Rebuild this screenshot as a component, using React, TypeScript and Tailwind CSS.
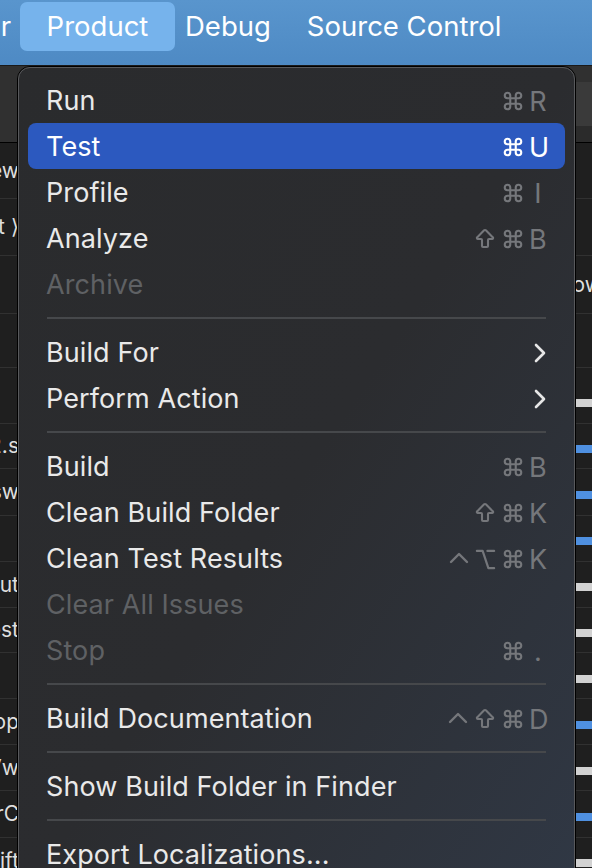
import React from 'react';
import { Command, Option, ArrowBigUp } from 'lucide-react';

type Item =
  | { kind: 'sep' }
  | {
      kind: 'item';
      label: string;
      keys?: string[];
      disabled?: boolean;
      active?: boolean;
      submenu?: boolean;
    };

const items: Item[] = [
  { kind: 'item', label: 'Run', keys: ['cmd', 'R'] },
  { kind: 'item', label: 'Test', keys: ['cmd', 'U'], active: true },
  { kind: 'item', label: 'Profile', keys: ['cmd', 'I'] },
  { kind: 'item', label: 'Analyze', keys: ['shift', 'cmd', 'B'] },
  { kind: 'item', label: 'Archive', disabled: true },
  { kind: 'sep' },
  { kind: 'item', label: 'Build For', submenu: true },
  { kind: 'item', label: 'Perform Action', submenu: true },
  { kind: 'sep' },
  { kind: 'item', label: 'Build', keys: ['cmd', 'B'] },
  { kind: 'item', label: 'Clean Build Folder', keys: ['shift', 'cmd', 'K'] },
  { kind: 'item', label: 'Clean Test Results', keys: ['ctrl', 'opt', 'cmd', 'K'] },
  { kind: 'item', label: 'Clear All Issues', disabled: true },
  { kind: 'item', label: 'Stop', keys: ['cmd', '.'], disabled: true },
  { kind: 'sep' },
  { kind: 'item', label: 'Build Documentation', keys: ['ctrl', 'shift', 'cmd', 'D'] },
  { kind: 'sep' },
  { kind: 'item', label: 'Show Build Folder in Finder' },
  { kind: 'sep' },
  { kind: 'item', label: 'Export Localizations...' },
];

// rows of the window that sits behind the menu
const rows: { h: number; left?: string; right?: string; bar?: 'white' | 'blue'; barTop?: number }[] = [
  { h: 56, left: 'New' },
  { h: 57, left: 'Set ⟩' },
  { h: 58, right: 'ow' },
  { h: 54 },
  { h: 56, bar: 'white', barTop: 31 },
  { h: 45, left: 'Sub2.s', bar: 'blue', barTop: 21 },
  { h: 47, left: 'File.sw', bar: 'blue', barTop: 22 },
  { h: 46, bar: 'blue', barTop: 21 },
  { h: 46, left: 'Out', bar: 'white', barTop: 21 },
  { h: 45, left: 'Test', bar: 'white', barTop: 21 },
  { h: 46, bar: 'white', barTop: 22 },
  { h: 46, left: 'Stop', bar: 'blue', barTop: 22 },
  { h: 46, left: 'Vw', bar: 'white', barTop: 22 },
  { h: 47, left: 'SrC', bar: 'blue', barTop: 22 },
  { h: 46, left: 'Swift', bar: 'white', barTop: 21 },
];

const Chevron = () => (
  <svg width="14" height="22" viewBox="0 0 14 22" fill="none">
    <polyline points="3,3 11,11 3,19" stroke="#e6e6e6" strokeWidth="2.6" strokeLinecap="round" strokeLinejoin="round" />
  </svg>
);

const Ctrl = () => (
  <svg width="20" height="22" viewBox="0 0 20 22" fill="none">
    <polyline points="2,14 10,6 18,14" stroke="currentColor" strokeWidth="2.4" strokeLinecap="round" strokeLinejoin="round" />
  </svg>
);

const Mod = ({ k }: { k: string }) => {
  if (k === 'cmd') return <Command size={22} strokeWidth={2.3} />;
  if (k === 'opt') return <Option size={23} strokeWidth={2.3} />;
  if (k === 'shift') return <ArrowBigUp size={24} strokeWidth={2.1} />;
  return <Ctrl />;
};

const Shortcut = ({ keys, active }: { keys: string[]; active?: boolean }) => {
  const mods = keys.slice(0, -1);
  const key = keys[keys.length - 1];
  return (
    <div className={`flex items-center gap-[5px] ${active ? 'text-white' : 'text-[#75777b]'}`}>
      {mods.map((m, i) => (
        <Mod key={i} k={m} />
      ))}
      <span className="w-[18px] text-center text-[27px] leading-none">{key}</span>
    </div>
  );
};

export default function App() {
  return (
    <div
      className="relative w-[592px] h-[868px] overflow-hidden bg-[#1f1f1f] flex flex-col"
      style={{ fontFamily: 'Inter, "Noto Sans", sans-serif' }}
    >
      {/* menu bar */}
      <div className="h-[65px] shrink-0 bg-linear-to-b from-[#5995cd] to-[#4e8ac4] flex items-start text-white text-[27.5px] pt-[2px]">
        <span className="w-[20px] h-[49px] flex items-center justify-end pr-[9px] overflow-visible">
          <span className="whitespace-nowrap">r</span>
        </span>
        <span className="w-[155px] h-[49px] rounded-[7px] bg-[#76b3ec] flex items-center justify-center">Product</span>
        <span className="h-[49px] flex items-center ml-[10px]">Debug</span>
        <span className="h-[49px] flex items-center ml-[36px]">Source Control</span>
      </div>
      <div className="h-px bg-[#1a1a1a] shrink-0" />

      {/* window behind */}
      <div className="h-[76px] shrink-0 bg-[#303030] flex flex-col">
        <div className="h-[16px]" />
        <div className="h-[44px] w-[100px] ml-auto bg-[#3a3a3a]" />
        <div className="flex-1 ml-auto w-[100px] bg-[#2b2b2b]" />
      </div>
      <div className="h-px bg-black shrink-0" />
      <div className="flex flex-col text-[#dedede] text-[21px]">
        {rows.map((r, i) => (
          <div key={i} className="relative flex items-center border-b border-[#313131] bg-[#1f1f1f]" style={{ height: r.h }}>
            <div className="w-[19px] flex justify-end shrink-0">
              {r.left && (
                <span className="whitespace-nowrap" style={{ fontFamily: 'Inter, "DejaVu Sans", sans-serif' }}>
                  {r.left}
                </span>
              )}
            </div>
            {r.right && <span className="ml-auto -mr-[10px] whitespace-nowrap">{r.right}</span>}
            {r.bar && (
              <span
                className={`absolute right-0 h-[8px] w-[70px] ${r.bar === 'blue' ? 'bg-[#4f90e0]' : 'bg-[#d2d2d2]'}`}
                style={{ top: r.barTop }}
              />
            )}
          </div>
        ))}
      </div>

      {/* the Product menu */}
      <div className="absolute left-[17px] top-[66px] w-[559px] h-[840px] rounded-[13px] border border-black">
        <div className="h-full rounded-[12px] border border-[#58595c] bg-linear-to-br from-[#2a2b2d] via-[#2b2c2f] to-[#303845] pt-[9px] px-[9px] text-[27px] tracking-[0.1px]">
          {items.map((it, i) =>
            it.kind === 'sep' ? (
              <div key={i} className="h-[22px] flex items-center px-[19px]">
                <div className="h-[2px] w-full bg-[#46484b]" />
              </div>
            ) : (
              <div
                key={i}
                className={`h-[46px] rounded-[8px] pl-[18px] pr-[18px] pt-[2px] flex items-center justify-between ${
                  it.active ? 'bg-[#2c59bf] text-white' : it.disabled ? 'text-[#5f6164]' : 'text-[#e9e9e9]'
                }`}
              >
                <span>{it.label}</span>
                {it.keys && <Shortcut keys={it.keys} active={it.active} />}
                {it.submenu && <Chevron />}
              </div>
            )
          )}
        </div>
      </div>
    </div>
  );
}
